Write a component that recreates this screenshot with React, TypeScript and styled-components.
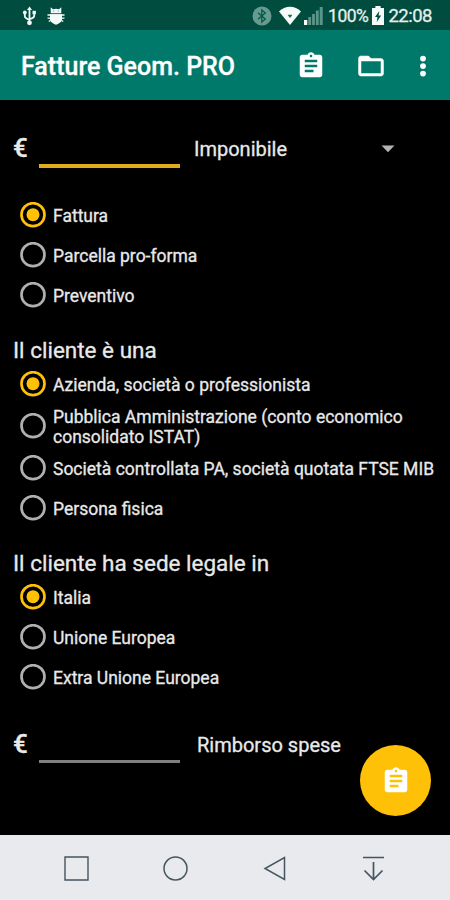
import React from 'react';
import styled, { createGlobalStyle } from 'styled-components';

const GlobalStyle = createGlobalStyle`
  * { box-sizing: border-box; }
  html, body { margin: 0; padding: 0; background: #000; }
  body { font-family: Roboto, "Liberation Sans", sans-serif; }
  svg { display: block; flex: none; }
`;

const Screen = styled.div`
  position: relative;
  display: flex;
  flex-direction: column;
  width: 450px;
  height: 900px;
  overflow: hidden;
  background: #000;
  color: #e9e9e9;
  -webkit-text-stroke: 0.3px currentColor;
`;

const StatusBar = styled.header`
  display: flex;
  align-items: center;
  flex: none;
  height: 30px;
  padding: 1px 18px 0 22px;
  background: #004d40;
  color: #f4fbf8;
`;

const StatusGroup = styled.div<{ $end?: boolean }>`
  display: flex;
  align-items: center;
  gap: ${(p) => (p.$end ? 4 : 10)}px;
  margin-left: ${(p) => (p.$end ? 'auto' : 0)};
`;

const StatusText = styled.span<{ $size: number }>`
  font-size: ${(p) => p.$size}px;
  letter-spacing: -0.5px;
  line-height: 30px;
  color: #e4efec;
`;

const AppBar = styled.div`
  display: flex;
  align-items: center;
  flex: none;
  height: 70px;
  padding: 1px 12px 0 21px;
  background: #00796b;
  color: #fff;
`;

const Title = styled.h1`
  flex: 1;
  margin: 3px 0 0;
  font-size: 25px;
  line-height: 30px;
  font-weight: 500;
  white-space: nowrap;
`;

const Actions = styled.div`
  display: flex;
  align-items: center;
  gap: 30px;
`;

const IconButton = styled.button<{ $pull?: boolean }>`
  display: flex;
  padding: 0;
  border: 0;
  background: none;
  color: inherit;
  margin-left: ${(p) => (p.$pull ? -7.5 : 0)}px;
`;

const Form = styled.main`
  display: flex;
  flex-direction: column;
  flex: none;
  height: 735px;
  padding: 28px 0 0;
`;

const AmountRow = styled.div<{ $top: number; $bottom: number }>`
  display: flex;
  height: 40px;
  margin: ${(p) => p.$top}px 0 ${(p) => p.$bottom}px;
  padding-left: 13px;
`;

const Currency = styled.span`
  width: 26px;
  font-size: 26px;
  line-height: 40px;
  font-weight: 500;
`;

const AmountField = styled.div<{ $active?: boolean }>`
  width: 141px;
  height: ${(p) => (p.$active ? 40 : 39)}px;
  border-bottom: ${(p) => (p.$active ? '4px solid #e0ac1c' : '3px solid #808080')};
`;

const AmountLabel = styled.span<{ $indent: number }>`
  margin-left: ${(p) => p.$indent}px;
  font-size: 20px;
  line-height: 43px;
  white-space: nowrap;
`;

const Caret = styled.svg`
  margin: 17px 0 0 94px;
`;

const GroupTitle = styled.h2`
  height: 49px;
  margin: 0;
  padding: 20px 0 0 13px;
  font-size: 22.5px;
  line-height: 30px;
  font-weight: 400;
  white-space: nowrap;
`;

const Option = styled.label<{ $tall?: boolean }>`
  display: flex;
  align-items: center;
  gap: 7px;
  height: ${(p) => (p.$tall ? 44.5 : 40)}px;
  padding-left: 20px;
`;

const OptionText = styled.span`
  padding-top: 3px;
  font-size: 17.5px;
  line-height: 20.5px;
  white-space: pre-line;
`;

const Fab = styled.button`
  position: absolute;
  right: 19px;
  bottom: 84px;
  display: flex;
  align-items: center;
  justify-content: center;
  width: 71px;
  height: 71px;
  padding: 0;
  border: 0;
  border-radius: 50%;
  background: #ffc107;
  color: #fff;
`;

const NavBar = styled.nav`
  display: flex;
  align-items: center;
  flex: none;
  height: 65px;
  gap: 69px;
  padding-left: 61px;
  background: #e8eaed;
  color: #455660;
`;

const Assignment = () => (
  <svg width="30" height="30" viewBox="0 0 24 24" fill="currentColor">
    <path d="M19 3h-4.18C14.4 1.84 13.3 1 12 1s-2.4.84-2.82 2H5c-1.1 0-2 .9-2 2v14c0 1.1.9 2 2 2h14c1.1 0 2-.9 2-2V5c0-1.1-.9-2-2-2zm-7 0c.55 0 1 .45 1 1s-.45 1-1 1-1-.45-1-1 .45-1 1-1zm2 14H7v-2h7v2zm3-4H7v-2h10v2zm0-4H7V7h10v2z" />
  </svg>
);

const Folder = () => (
  <svg width="30" height="30" viewBox="0 0 24 24" fill="currentColor" stroke="currentColor" strokeWidth="0.4">
    <path d="M20 6h-8l-2-2H4c-1.1 0-1.99.9-1.99 2L2 18c0 1.1.9 2 2 2h16c1.1 0 2-.9 2-2V8c0-1.1-.9-2-2-2zm0 12H4V8h16v10z" />
  </svg>
);

const More = () => (
  <svg width="30" height="30" viewBox="0 0 24 24" fill="currentColor">
    <circle cx="12" cy="6" r="2.3" />
    <circle cx="12" cy="12" r="2.3" />
    <circle cx="12" cy="18" r="2.3" />
  </svg>
);

const Usb = () => (
  <svg width="15" height="20" viewBox="0 0 15 20" fill="currentColor">
    <path d="M7.5 0.5 10 4H5z" />
    <path d="M7.5 3v13M2.8 7v3.2c0 1.4 1 2.2 4.7 3.6M12.2 7v3c0 1.4-1 2-4.7 3.2" fill="none" stroke="currentColor" strokeWidth="1.8" />
    <circle cx="7.5" cy="16.8" r="2.4" />
    <circle cx="2.8" cy="6.5" r="1.9" />
    <path d="M10.5 4.8h3.4v3.4h-3.4z" />
  </svg>
);

const DebugBug = () => (
  <svg width="18" height="18" viewBox="0 0 18 18" fill="currentColor">
    <path d="M3.7 0.3 6 2.2Q9 1.4 12 2.2L14.3.3V6.3H3.7z" />
    <path d="M3 7.2h12v5c0 2.6-2.6 4.1-6 5.6-3.4-1.5-6-3-6-5.6z" />
    <path d="M.5 8h17M.5 11.2h17M3.4 13.4 1.8 14.6M14.6 13.4l1.6 1.2" stroke="currentColor" strokeWidth="1.3" />
    <path d="M6.2 4h1M10.8 4h1" stroke="#3c776c" strokeWidth="0.8" />
  </svg>
);

const Bluetooth = () => (
  <svg width="20" height="20" viewBox="0 0 20 20">
    <circle cx="10" cy="10" r="9.5" fill="#679b90" />
    <path d="m6 6.8 7.3 6.2-3.5 3V4l3.5 3L6 13.2" fill="none" stroke="#07594b" strokeWidth="1.3" />
  </svg>
);

const Wifi = styled.svg`
  margin: 0 -1px 0 3px;
`;

const Signal = () => (
  <svg width="20" height="20" viewBox="0 0 20 20" fill="#5c968a">
    <path d="M0 14h3.3v5H0z" fill="currentColor" />
    <path d="M4.3 11h2.8v8H4.3zM8.1 8h2.8v11H8.1zM11.9 4.5h2.8V19h-2.8zM15.7 1h3v18h-3z" />
  </svg>
);

const Battery = () => (
  <svg width="12" height="19" viewBox="0 0 12 19">
    <path d="M3.4 0h5.2v2H12v17H0V2h3.4z" fill="currentColor" />
    <path d="M7.3 5 3 11h2.5l-.8 5 4.5-6.5H6.6z" fill="#004d40" />
  </svg>
);

const Radio = ({ on }: { on?: boolean }) => (
  <svg width="26" height="26" viewBox="0 0 26 26">
    <circle cx="13" cy="12.7" r="11.5" fill="none" stroke={on ? '#ffc107' : '#b0b0b0'} strokeWidth="2.7" />
    {on && <circle cx="13" cy="12.7" r="6.5" fill="#ffc107" />}
  </svg>
);

type Choice = { text: string; on?: boolean; tall?: boolean };

const documentTypes: Choice[] = [
  { text: 'Fattura', on: true },
  { text: 'Parcella pro-forma' },
  { text: 'Preventivo' },
];

const clientTypes: Choice[] = [
  { text: 'Azienda, società o professionista', on: true },
  { text: 'Pubblica Amministrazione (conto economico\nconsolidato ISTAT)', tall: true },
  { text: 'Società controllata PA, società quotata FTSE MIB' },
  { text: 'Persona fisica' },
];

const locations: Choice[] = [
  { text: 'Italia', on: true },
  { text: 'Unione Europea' },
  { text: 'Extra Unione Europea' },
];

const Options = ({ items }: { items: Choice[] }) => (
  <div role="radiogroup">
    {items.map((item) => (
      <Option key={item.text} $tall={item.tall}>
        <Radio on={item.on} />
        <OptionText>{item.text}</OptionText>
      </Option>
    ))}
  </div>
);

export default function App() {
  return (
    <>
      <GlobalStyle />
      <Screen>
        <StatusBar>
          <StatusGroup>
            <Usb />
            <DebugBug />
          </StatusGroup>
          <StatusGroup $end>
            <Bluetooth />
            <Wifi width="22" height="19" viewBox="0 0 22 19">
              <path d="M0 5.5C5.8-.8 16.2-.8 22 5.5L11 19z" fill="currentColor" />
              <path d="M8.6 8.8h4.8L11 12z" fill="#285f53" />
            </Wifi>
            <Signal />
            <StatusText $size={17.5}>100%</StatusText>
            <Battery />
            <StatusText $size={18.5}>22:08</StatusText>
          </StatusGroup>
        </StatusBar>
        <AppBar>
          <Title>Fatture Geom. PRO</Title>
          <Actions>
            <IconButton><Assignment /></IconButton>
            <IconButton><Folder /></IconButton>
            <IconButton $pull><More /></IconButton>
          </Actions>
        </AppBar>
        <Form>
          <AmountRow $top={0} $bottom={26.5}>
            <Currency>€</Currency>
            <AmountField $active />
            <AmountLabel $indent={14}>Imponibile</AmountLabel>
            <Caret width="14" height="8" viewBox="0 0 14 8">
              <path d="M.5.5h13L7 7.2z" fill="#b3b3b3" />
            </Caret>
          </AmountRow>
          <Options items={documentTypes} />
          <GroupTitle>Il cliente è una</GroupTitle>
          <Options items={clientTypes} />
          <GroupTitle>Il cliente ha sede legale in</GroupTitle>
          <Options items={locations} />
          <AmountRow $top={27} $bottom={0}>
            <Currency>€</Currency>
            <AmountField />
            <AmountLabel $indent={17}>Rimborso spese</AmountLabel>
          </AmountRow>
        </Form>
        <NavBar>
          <svg width="30" height="30" viewBox="0 0 30 30" fill="none" stroke="currentColor" strokeWidth="1.4">
            <path d="M4 4h23v23H4z" />
          </svg>
          <svg width="30" height="30" viewBox="0 0 30 30" fill="none" stroke="currentColor" strokeWidth="1.5">
            <circle cx="15.5" cy="15.5" r="11.5" />
          </svg>
          <svg width="30" height="30" viewBox="0 0 30 30" fill="none" stroke="currentColor" strokeWidth="1.5">
            <path d="M25.5 4.5v22L6 15.5z" />
          </svg>
          <svg width="30" height="30" viewBox="0 0 30 30" fill="none" stroke="currentColor" strokeWidth="1.7">
            <path d="M5 4.5h21M15.5 9v17.5M6.5 17.5l9 9 9-9" />
          </svg>
        </NavBar>
        <Fab><Assignment /></Fab>
      </Screen>
    </>
  );
}
